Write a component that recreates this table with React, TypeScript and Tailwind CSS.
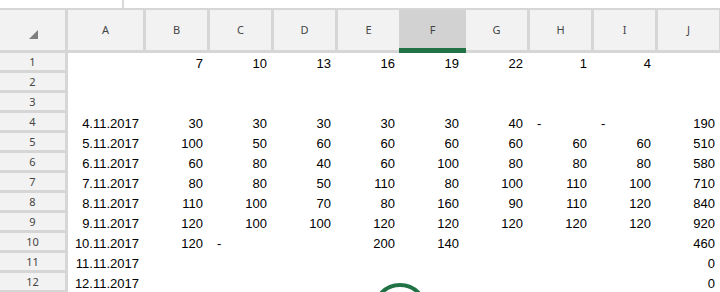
const COLS = ["A", "B", "C", "D", "E", "F", "G", "H", "I", "J"];

const ROWS: string[][] = [
  ["", "7", "10", "13", "16", "19", "22", "1", "4", ""],
  [],
  [],
  ["4.11.2017", "30", "30", "30", "30", "30", "40", "-", "-", "190"],
  ["5.11.2017", "100", "50", "60", "60", "60", "60", "60", "60", "510"],
  ["6.11.2017", "60", "80", "40", "60", "100", "80", "80", "80", "580"],
  ["7.11.2017", "80", "80", "50", "110", "80", "100", "110", "100", "710"],
  ["8.11.2017", "110", "100", "70", "80", "160", "90", "110", "120", "840"],
  ["9.11.2017", "120", "100", "100", "120", "120", "120", "120", "120", "920"],
  ["10.11.2017", "120", "-", "", "200", "140", "", "", "", "460"],
  ["11.11.2017", "", "", "", "", "", "", "", "", "0"],
  ["12.11.2017", "", "", "", "", "", "", "", "", "0"],
];

function ColumnHeader({ label }: { label: string }) {
  // selected column: highlight swallows both neighbouring separators
  if (label === "F") {
    return (
      <div className="w-[67px] shrink-0 h-[43px] bg-[#d2d2d2] flex flex-col">
        <div className="flex-1 flex items-center justify-center pt-[3px]">{label}</div>
        <div className="h-[5px] bg-[#217346]" />
      </div>
    );
  }
  if (label === "E") {
    return (
      <div className="w-[61px] shrink-0 h-[43px] bg-[#f2f2f2] border-b-[3px] border-[#d6d6d6] flex items-center justify-center pt-[1px]">
        {label}
      </div>
    );
  }
  const width = label === "A" ? "w-[78px]" : "w-[64px]";
  return (
    <div
      className={`${width} shrink-0 h-[43px] bg-[#f2f2f2] border-r-[3px] border-b-[3px] border-[#d6d6d6] flex items-center justify-center pt-[1px]`}
    >
      {label}
    </div>
  );
}

function Cell({ value, first }: { value?: string; first: boolean }) {
  const width = first ? "w-[78px]" : "w-[64px]";
  if (value === "-") {
    return <div className={`${width} shrink-0 h-[20px] text-left pl-[7px]`}>-</div>;
  }
  return <div className={`${width} shrink-0 h-[20px] text-right pr-[7px]`}>{value}</div>;
}

export default function App() {
  return (
    <div className="relative w-[720px] h-[292px] overflow-hidden bg-white text-black">
      {/* formula bar edge */}
      <div className="flex h-[10px] border-b-[2px] border-[#d6d6d6]">
        <div className="w-[122px]" />
        <div className="w-[2px] h-full bg-[#d9d9d9]" />
      </div>

      {/* column headers */}
      <div className="flex text-[11px] text-[#444] font-['Noto_Sans',sans-serif]">
        <div className="w-[68px] shrink-0 h-[43px] bg-[#f2f2f2] border-r-[3px] border-b-[3px] border-[#d6d6d6] flex items-end justify-end pr-[27px] pb-[11px]">
          <svg width="9" height="9" viewBox="0 0 9 9">
            <polygon points="9,0 9,9 0,9" fill="#7f7f7f" />
          </svg>
        </div>
        {COLS.map((c) => (
          <ColumnHeader key={c} label={c} />
        ))}
      </div>

      {/* rows */}
      <div className="flex flex-col">
        {ROWS.map((row, i) => (
          <div key={i} className="flex h-[20px]">
            <div className="w-[68px] shrink-0 h-[20px] bg-[#f2f2f2] border-r-[3px] border-b-[3px] border-[#d6d6d6] text-center text-[11px] leading-[18px] text-[#444] font-['Noto_Sans',sans-serif]">
              {i + 1}
            </div>
            <div className="flex text-[13px] leading-[22px] font-['Liberation_Sans',Arial,sans-serif]">
              {COLS.map((c, j) => (
                <Cell key={c} value={row[j]} first={j === 0} />
              ))}
            </div>
          </div>
        ))}
      </div>

      {/* loading ring */}
      <svg
        className="absolute left-[372px] top-[283px]"
        width="56"
        height="56"
        viewBox="0 0 56 56"
      >
        <circle cx="28" cy="28" r="26" fill="none" stroke="#217346" strokeWidth="4" />
      </svg>
    </div>
  );
}
